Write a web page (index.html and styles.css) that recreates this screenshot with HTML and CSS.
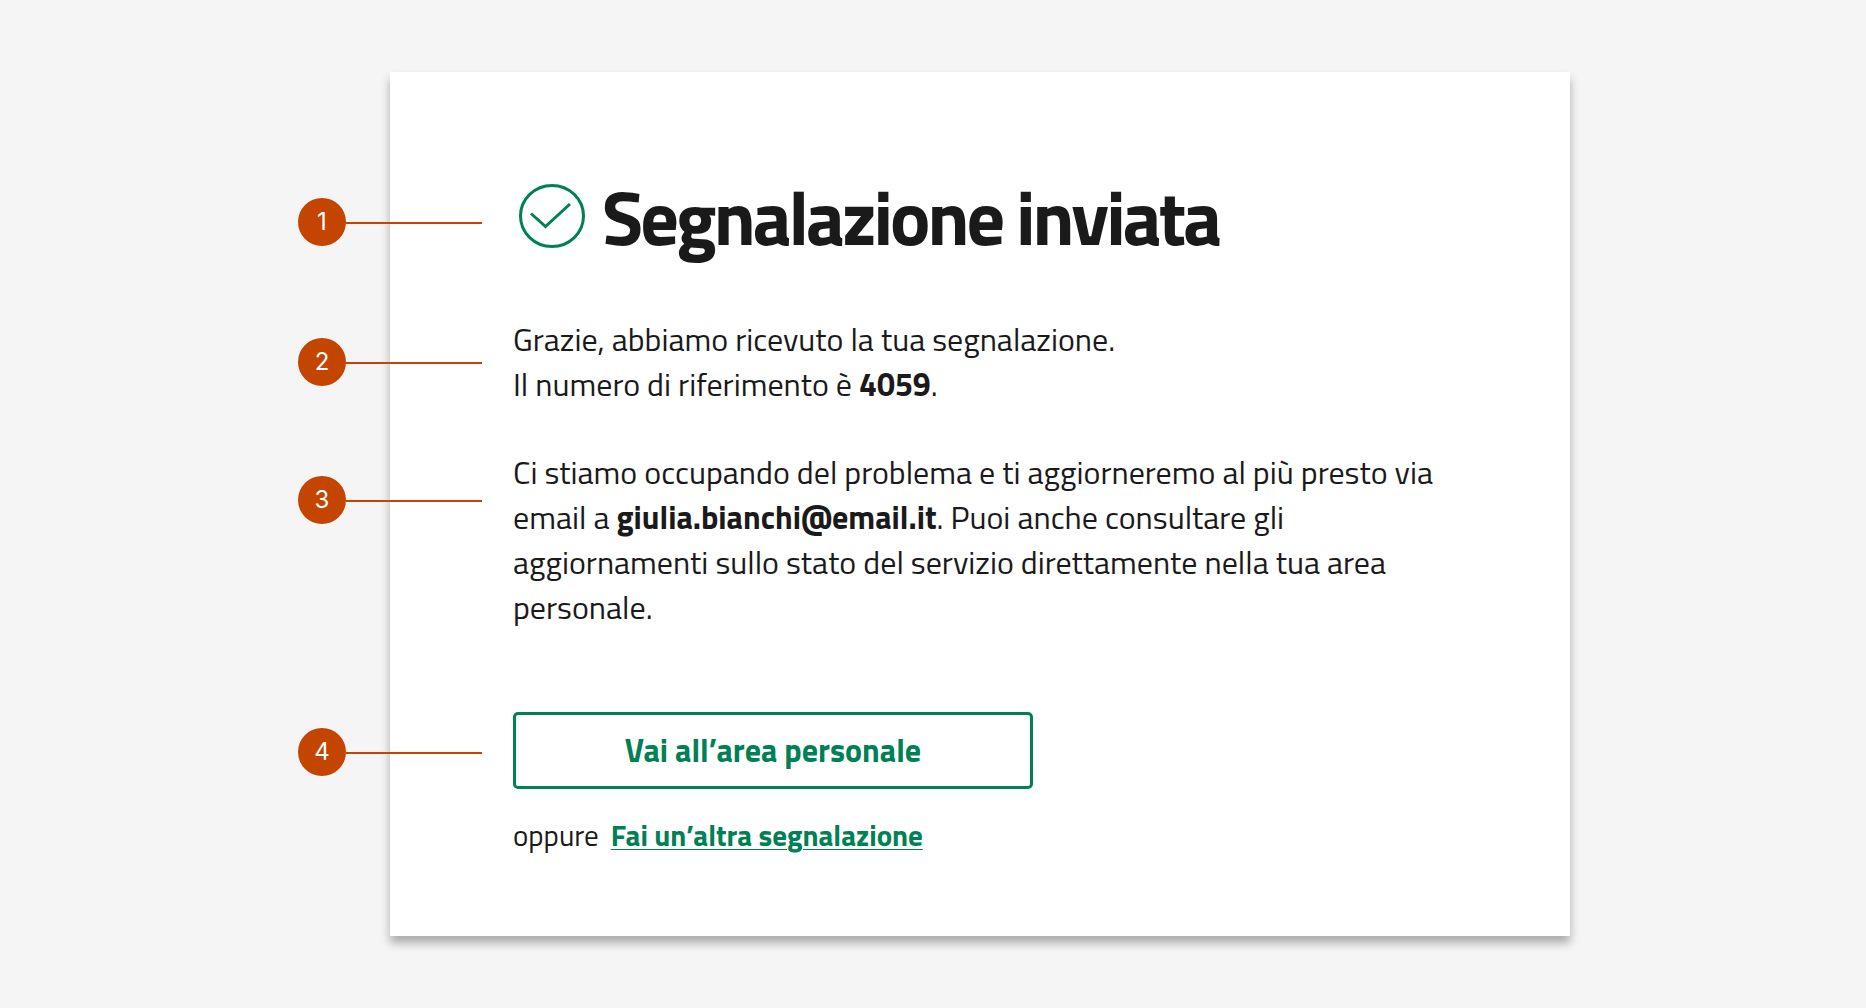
FILE: index.html
```html
<!DOCTYPE html>
<html lang="it">
<head>
  <meta charset="utf-8">
  <meta name="viewport" content="width=device-width, initial-scale=1">
  <title>Segnalazione inviata</title>
  <link rel="stylesheet" href="styles.css">
</head>
<body>
  <main class="card">
    <header class="step step-title">
      <span class="marker"><span class="marker-badge">1</span></span>
      <svg class="title-icon" viewBox="0 0 78 80" aria-hidden="true">
        <ellipse cx="39" cy="40" rx="31.5" ry="30.5"/>
        <path d="M18 37.5 32.5 50.5 57 28"/>
      </svg>
      <h1 class="title">Segnalazione inviata</h1>
    </header>

    <div class="step step-summary">
      <span class="marker"><span class="marker-badge">2</span></span>
      <p class="text">Grazie, abbiamo ricevuto la tua segnalazione.<br>Il numero di riferimento è <strong>4059</strong>.</p>
    </div>

    <div class="step step-details">
      <span class="marker"><span class="marker-badge">3</span></span>
      <p class="text">Ci stiamo occupando del problema e ti aggiorneremo al più presto via email a <strong>giulia.bianchi@email.it</strong>. Puoi anche consultare gli aggiornamenti sullo stato del servizio direttamente nella tua area personale.</p>
    </div>

    <div class="step step-action">
      <span class="marker"><span class="marker-badge">4</span></span>
      <button class="button" type="button">Vai all’area personale</button>
    </div>

    <p class="alternative">
      <span>oppure</span>
      <a class="link" href="#">Fai un’altra segnalazione</a>
    </p>
  </main>
</body>
</html>
```
FILE: styles.css
```css
:root {
  --ink: #1a1a1a;
  --green: #008055;
  --orange: #c44500;
}

* {
  box-sizing: border-box;
}

body {
  margin: 0;
  padding: 72px 296px 72px 390px;
  background: #f5f5f5;
  color: var(--ink);
  font-family: "Titillium Web", "Roboto", sans-serif;
}

.card {
  padding: 104px 123px 79px;
  background: #fff;
  box-shadow: 0 7px 9px rgba(0, 0, 0, 0.3);
}

.step {
  position: relative;
}

/* Numbered callouts that reach in from outside the card */
.marker {
  position: absolute;
  top: var(--marker-top);
  left: -215px;
  display: flex;
  align-items: center;
  width: 184px;
}

.marker::after {
  content: "";
  flex: 1;
  height: 2px;
  margin-top: 2px;
  background: var(--orange);
}

.marker-badge {
  display: flex;
  align-items: center;
  justify-content: center;
  width: 48px;
  height: 48px;
  border-radius: 50%;
  background: var(--orange);
  color: #fff;
  font: 24px/24px "Inter", sans-serif;
}

.step-title {
  --marker-top: 22px;
  display: flex;
  align-items: flex-start;
  gap: 11px;
}

.title-icon {
  flex: none;
  width: 78px;
  height: 80px;
  fill: none;
  stroke: var(--green);
  stroke-width: 3;
}

.title {
  margin: 0;
  font-size: 76px;
  font-weight: 700;
  line-height: 82px;
  letter-spacing: -3px;
}

.step-summary {
  --marker-top: 21px;
  margin-top: 59px;
}

.step-details {
  --marker-top: 26px;
  margin-top: 43px;
}

.text {
  margin: 0;
  font-size: 32px;
  line-height: 45px;
}

.step-action {
  --marker-top: 16px;
  margin-top: 82px;
}

.button {
  display: block;
  width: 520px;
  max-width: 100%;
  padding: 13px 24px;
  border: 3px solid var(--green);
  border-radius: 5px;
  background: #fff;
  color: var(--green);
  font: 700 32px/45px "Titillium Web", "Roboto", sans-serif;
  cursor: pointer;
}

.alternative {
  display: flex;
  gap: 12px;
  margin: 24px 0 0;
  font-size: 29px;
  line-height: 44px;
}

.link {
  color: var(--green);
  font-weight: 700;
  text-decoration-thickness: 1px;
  text-underline-offset: 3px;
}
```
